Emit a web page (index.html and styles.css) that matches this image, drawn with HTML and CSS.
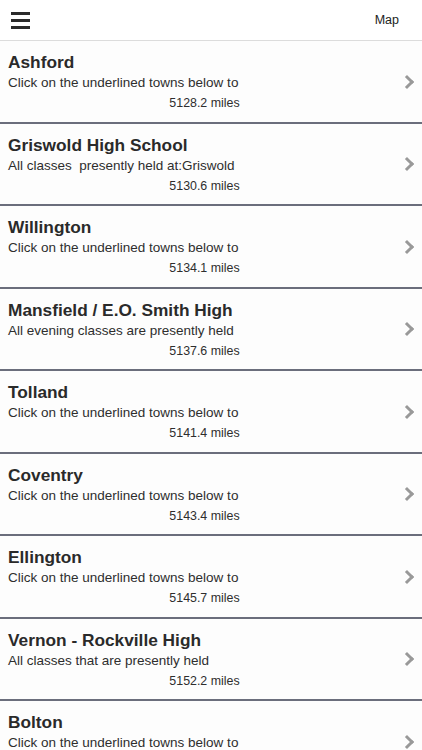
FILE: index.html
```html
<!DOCTYPE html>
<html>
<head lang="en">
    <meta charset="UTF-8">
    <title>Locations</title>
    <link rel="stylesheet" href="styles.css">
</head>
<body>
<div id="header">
    <span class="menu-btn">
        <svg width="20" height="18" viewBox="0 0 20 18">
            <rect x="0" y="1" width="19" height="3" fill="#2b2b2b"/>
            <rect x="0" y="8" width="19" height="3" fill="#2b2b2b"/>
            <rect x="0" y="15" width="19" height="3" fill="#2b2b2b"/>
        </svg>
    </span>
    <span class="map-btn">Map</span>
</div>
<ul id="list">
    <li class="row">
        <div class="info">
            <h2>Ashford</h2>
            <p class="desc">Click on the underlined towns below to</p>
            <p class="dist">5128.2 miles</p>
        </div>
        <span class="chev"></span>
    </li>
    <li class="row">
        <div class="info">
            <h2>Griswold High School</h2>
            <p class="desc">All classes&nbsp; presently held at:Griswold</p>
            <p class="dist">5130.6 miles</p>
        </div>
        <span class="chev"></span>
    </li>
    <li class="row">
        <div class="info">
            <h2>Willington</h2>
            <p class="desc">Click on the underlined towns below to</p>
            <p class="dist">5134.1 miles</p>
        </div>
        <span class="chev"></span>
    </li>
    <li class="row">
        <div class="info">
            <h2>Mansfield / E.O. Smith High</h2>
            <p class="desc">All evening classes are presently held</p>
            <p class="dist">5137.6 miles</p>
        </div>
        <span class="chev"></span>
    </li>
    <li class="row">
        <div class="info">
            <h2>Tolland</h2>
            <p class="desc">Click on the underlined towns below to</p>
            <p class="dist">5141.4 miles</p>
        </div>
        <span class="chev"></span>
    </li>
    <li class="row">
        <div class="info">
            <h2>Coventry</h2>
            <p class="desc">Click on the underlined towns below to</p>
            <p class="dist">5143.4 miles</p>
        </div>
        <span class="chev"></span>
    </li>
    <li class="row">
        <div class="info">
            <h2>Ellington</h2>
            <p class="desc">Click on the underlined towns below to</p>
            <p class="dist">5145.7 miles</p>
        </div>
        <span class="chev"></span>
    </li>
    <li class="row">
        <div class="info">
            <h2>Vernon - Rockville High</h2>
            <p class="desc">All classes that are presently held</p>
            <p class="dist">5152.2 miles</p>
        </div>
        <span class="chev"></span>
    </li>
    <li class="row">
        <div class="info">
            <h2>Bolton</h2>
            <p class="desc">Click on the underlined towns below to</p>
            <p class="dist">5155.0 miles</p>
        </div>
        <span class="chev"></span>
    </li>
</ul>
</body>
</html>
```

FILE: styles.css
```css
* {
    margin: 0;
    padding: 0;
}

ul {
    list-style: none;
}

html, body {
    height: 750px;
    overflow: hidden;
}

body {
    background-color: #fff;
    font-family: "Liberation Sans", Arial, sans-serif;
    color: #2e2e2e;
}

#header {
    height: 40px;
    border-bottom: 1px solid #dcdcdc;
    display: flex;
    align-items: center;
    justify-content: space-between;
    padding: 0 23px 0 11px;
    background-color: #fff;
}

.menu-btn {
    display: flex;
    margin-top: -1px;
}

.map-btn {
    font-size: 12.5px;
    color: #222;
}

.row {
    display: flex;
    align-items: center;
    padding: 10px 0 9.5px 8px;
    border-bottom: 2px solid #6b6e7c;
    background-color: #fdfdfd;
}

.info {
    flex: 1;
}

.info h2 {
    font-size: 17.3px;
    line-height: 22px;
    font-weight: bold;
    color: #2a2a2a;
}

.desc {
    font-size: 13.5px;
    line-height: 19px;
    color: #2e2e2e;
    white-space: nowrap;
}

.dist {
    margin-top: 2px;
    font-size: 12.4px;
    line-height: 18px;
    text-align: center;
    padding-left: 10px;
    color: #2e2e2e;
}

.chev {
    width: 7px;
    height: 7px;
    border-top: 3px solid #999;
    border-right: 3px solid #999;
    transform: rotate(45deg);
    margin: 0 10px 0 11px;
}
```
